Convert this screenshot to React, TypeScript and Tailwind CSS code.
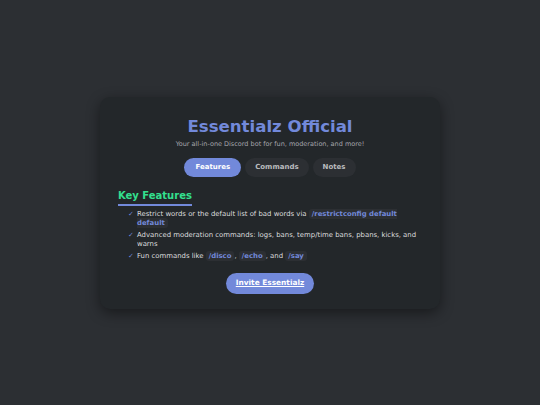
import React, { useState } from 'react';

const tabs = ['Features', 'Commands', 'Notes'];

const Code: React.FC<{ children: React.ReactNode }> = ({ children }) => (
  <code className="rounded-[3px] bg-[#2c2f33] px-[3px] py-[1px] font-bold text-[#7289da] [font-family:'DejaVu_Sans',sans-serif]">
    {children}
  </code>
);

export default function App() {
  const [active, setActive] = useState('Features');

  return (
    <div className="flex h-[405px] w-[540px] items-center justify-center bg-[#2c2f33] [font-family:'DejaVu_Sans',sans-serif]">
      <div className="w-[340px] rounded-[10px] bg-[#23272a] px-[18px] pt-[20px] pb-[15px] shadow-[0_4px_14px_rgba(0,0,0,0.45)]">
        <h1 className="text-center text-[16.6px] font-bold leading-[20px] text-[#7289da]">Essentialz Official</h1>
        <p className="mt-[3px] text-center text-[6.5px] leading-[9px] text-[#a3a6aa]">
          Your all-in-one Discord bot for fun, moderation, and more!
        </p>

        <div className="mt-[9px] flex justify-center gap-[4px]">
          {tabs.map((t) => (
            <button
              key={t}
              onClick={() => setActive(t)}
              className={
                active === t
                  ? 'h-[19px] rounded-full bg-[#7289da] px-[11px] text-[7px] font-bold text-white'
                  : 'h-[19px] rounded-full bg-[#2c2f33] px-[10px] text-[7px] font-bold text-[#b9bbbe]'
              }
            >
              {t}
            </button>
          ))}
        </div>

        <h2 className="mt-[12px] inline-block border-b-2 border-[#7289da] pb-[1px] text-[10px] font-bold leading-[14px] text-[#33e08f]">
          Key Features
        </h2>

        <ul className="mt-[4px] flex flex-col gap-[3px] pl-[10px] text-[6.9px] leading-[9px] text-[#dcddde]">
          <li className="flex gap-[4px]">
            <span className="w-[5px] shrink-0 text-[#7289da]">✓</span>
            <span>
              Restrict words or the default list of bad words via <Code>/restrictconfig default default</Code>
            </span>
          </li>
          <li className="flex gap-[4px]">
            <span className="w-[5px] shrink-0 text-[#7289da]">✓</span>
            <span>Advanced moderation commands: logs, bans, temp/time bans, pbans, kicks, and warns</span>
          </li>
          <li className="flex gap-[4px]">
            <span className="w-[5px] shrink-0 text-[#7289da]">✓</span>
            <span>
              Fun commands like <Code>/disco</Code>, <Code>/echo</Code>, and <Code>/say</Code>
            </span>
          </li>
        </ul>

        <div className="mt-[12px] flex justify-center">
          <a
            href="#"
            className="flex h-[21px] items-center rounded-full bg-[#7289da] px-[10px] text-[7.4px] font-bold text-white underline"
          >
            Invite Essentialz
          </a>
        </div>
      </div>
    </div>
  );
}
